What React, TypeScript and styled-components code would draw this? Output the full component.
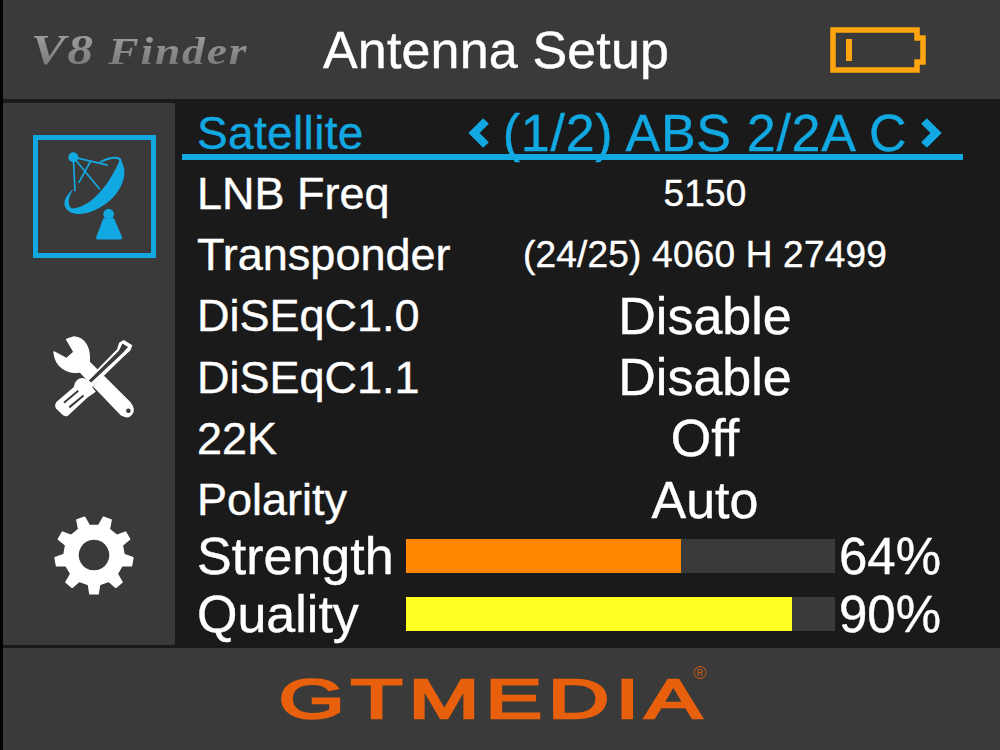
import React from "react";
import styled, { createGlobalStyle } from "styled-components";

const GlobalStyle = createGlobalStyle`
  html, body {
    margin: 0;
    background: #000;
  }
`;

const BLUE = "#12a9e2";
const PANEL = "#3a3a3a";
const DARK = "#1a1a1a";

const Screen = styled.div`
  width: 1000px;
  height: 750px;
  padding-left: 3px;
  box-sizing: border-box;
  display: flex;
  flex-direction: column;
  font-family: "Liberation Sans", Arial, sans-serif;
  color: #fff;
  overflow: hidden;
  -webkit-text-stroke: 0.4px currentColor;
`;

const Header = styled.header`
  height: 99px;
  flex: none;
  background: ${PANEL};
  display: flex;
  align-items: center;
`;

const Brand = styled.div`
  width: 320px;
  padding-left: 28px;
  box-sizing: border-box;
  flex: none;
  font-family: "Liberation Serif", serif;
  font-style: italic;
  font-weight: 700;
  font-size: 37px;
  letter-spacing: 1.5px;
  white-space: nowrap;
  background: linear-gradient(#a8a8a8, #6f6f6f);
  background-clip: text;
  -webkit-background-clip: text;
  color: transparent;
  -webkit-text-stroke: 0;
  transform: scaleX(1.23);
  transform-origin: 28px 50%;
  span {
    font-size: 42px;
  }
`;

const Title = styled.h1`
  margin: 0;
  font-size: 52px;
  font-weight: 400;
  letter-spacing: 0.15px;
  flex: 1;
  white-space: nowrap;
`;

const BatteryWrap = styled.svg`
  width: 96px;
  height: 46px;
  margin-right: 74px;
  flex: none;
`;

const Body = styled.div`
  flex: 1;
  display: flex;
  background: ${DARK};
  min-height: 0;
`;

const Sidebar = styled.nav`
  width: 172px;
  flex: none;
  margin: 4px 0 3px;
  background: ${PANEL};
  display: flex;
  flex-direction: column;
  align-items: center;
  padding: 32px 0 0 10px;
  box-sizing: border-box;
`;

const DishBox = styled.div`
  width: 123px;
  height: 123px;
  box-sizing: border-box;
  border: 5px solid ${BLUE};
  margin-bottom: 74px;
`;

const ToolIcon = styled.svg`
  display: block;
  width: 88px;
  height: 88px;
  margin-bottom: 94px;
`;

const GearIcon = styled.svg`
  display: block;
  width: 82px;
  height: 82px;
`;

const Main = styled.main`
  flex: 1;
  padding: 4px 37px 5px 7px;
  display: flex;
  flex-direction: column;
  min-width: 0;
`;

const SelectedRow = styled.div`
  height: 51px;
  flex: none;
  padding-left: 15px;
  border-bottom: 6px solid ${BLUE};
  color: ${BLUE};
  display: grid;
  grid-template-columns: 250px 516px;
  align-items: center;
`;

const Row = styled.div`
  height: 61.2px;
  flex: none;
  box-sizing: border-box;
  padding: 6px 0 0 15px;
  display: grid;
  grid-template-columns: 250px 516px;
  align-items: center;
  line-height: 1;
`;

const Label = styled.span`
  font-size: 45px;
  white-space: nowrap;
`;

const SatelliteLabel = styled(Label)`
  font-size: 46px;
  letter-spacing: 0.35px;
`;

const Value = styled.span<{ $small?: boolean }>`
  font-size: ${({ $small }) => ($small ? "37px" : "52px")};
  letter-spacing: ${({ $small }) => ($small ? "0.2px" : "0")};
  text-align: center;
  white-space: nowrap;
`;

const Picker = styled.div`
  display: flex;
  justify-content: center;
  align-items: center;
  gap: 12px;
  font-size: 52px;
  letter-spacing: 0.7px;
  white-space: nowrap;
`;

const Chevron = styled.svg`
  width: 24px;
  height: 30px;
  flex: none;
`;

const MeterRow = styled.div`
  height: 58px;
  flex: none;
  padding-left: 15px;
  display: flex;
  align-items: center;
  line-height: 1;
`;

const MeterLabel = styled.span`
  width: 209px;
  flex: none;
  font-size: 52px;
  white-space: nowrap;
`;

const Track = styled.div`
  width: 429px;
  height: 34px;
  flex: none;
  background: ${PANEL};
`;

const Fill = styled.div<{ $color: string }>`
  height: 100%;
  background: ${({ $color }) => $color};
`;

const Percent = styled.span`
  margin-left: 4px;
  font-size: 51px;
`;

const Footer = styled.footer`
  height: 102px;
  flex: none;
  background: ${PANEL};
  display: flex;
  justify-content: center;
  align-items: center;
`;

const Logo = styled.div`
  position: relative;
  margin-right: 16px;
  color: #e8600c;
  font-size: 55px;
  line-height: 41px;
  letter-spacing: 4px;
  -webkit-text-stroke: 2.4px #e8600c;
  transform: scaleX(1.54);
  white-space: nowrap;
`;

const Registered = styled.span`
  position: absolute;
  bottom: calc(100% - 3px);
  right: -2px;
  font-size: 18px;
  line-height: 1;
  letter-spacing: 0;
  color: #c4591a;
  -webkit-text-stroke: 0;
  font-weight: 400;
  transform: scaleX(0.65);
`;

const gearPath = (() => {
  const teeth = 9;
  const pts: string[] = [];
  for (let i = 0; i < teeth; i++) {
    const mid = Math.PI / 2 + (i * 2 * Math.PI) / teeth;
    const step = (2 * Math.PI) / teeth;
    const add = (a: number, r: number) =>
      pts.push(`${(41 + r * Math.cos(a)).toFixed(2)} ${(41 + r * Math.sin(a)).toFixed(2)}`);
    add(mid - step * 0.27, 30);
    add(mid - step * 0.15, 39);
    add(mid + step * 0.15, 39);
    add(mid + step * 0.27, 30);
  }
  return `M${pts.join("L")}Z M41 25a16 16 0 1 0 .01 0Z`;
})();

function Battery() {
  return (
    <BatteryWrap viewBox="0 0 96 46">
      <path d="M3 3H87V11H93V35H87V43H3Z" fill="none" stroke="#ffa50f" strokeWidth="5.5" />
      <rect x="16" y="12" width="6" height="22" fill="#ffa50f" />
    </BatteryWrap>
  );
}

function DishIcon() {
  return (
    <svg viewBox="54 60 339 336" width="113" height="113" style={{ display: "block" }}>
      <path
        d="M300 116C326 150 312 200 272 238C230 276 165 298 138 264C126 245 138 225 160 205C145 232 140 252 155 264C210 262 268 195 300 116Z"
        fill={BLUE}
      />
      <path d="M240 125C270 110 298 106 303 122" fill="none" stroke={BLUE} strokeWidth="6" />
      <g stroke={BLUE} strokeWidth="5" fill="none">
        <path d="M160 110L165 212M160 110L240 207M160 110L263 134M176 187L212 122" />
      </g>
      <circle cx="160" cy="110" r="15" fill={BLUE} />
      <circle cx="266" cy="281" r="16" fill={BLUE} />
      <path d="M250 293H282L307 352Q307 357 300 357H234Q227 357 228 352Z" fill={BLUE} />
    </svg>
  );
}

function ToolsIcon() {
  return (
    <ToolIcon viewBox="150 60 265 265">
      <path
        d="M222 75C255 78 272 108 268 150L392 274C412 300 392 325 365 310L240 180C205 188 165 165 162 120L200 140L222 120L200 82Z"
        fill="#fff"
        stroke="#fff"
        strokeWidth="4"
        strokeLinejoin="round"
      />
      <circle cx="386" cy="297" r="7" fill={PANEL} />
      <path d="M268 218L360 122" stroke={PANEL} strokeWidth="24" />
      <path d="M372 84L398 100L392 116L372 134L275 228L258 208L352 112L358 92Z" fill="#fff" />
      <path d="M368 95L385 105L368 124L274 212L267 206L358 116Z" fill={PANEL} />
      <path
        d="M262 206L288 240L262 258L204 312Q195 317 186 308L168 290Q162 280 170 270L222 226C226 198 250 192 262 206Z"
        fill="#fff"
      />
      <path d="M192 273L235 237M208 287L251 251" stroke={PANEL} strokeWidth="6" />
    </ToolIcon>
  );
}

function SettingsIcon() {
  return (
    <GearIcon viewBox="0 0 82 82">
      <path d={gearPath} fill="#fff" fillRule="evenodd" stroke="#fff" strokeWidth="1.5" strokeLinejoin="round" />
    </GearIcon>
  );
}

const rows: [string, string, boolean?][] = [
  ["LNB Freq", "5150", true],
  ["Transponder", "(24/25) 4060 H 27499", true],
  ["DiSEqC1.0", "Disable"],
  ["DiSEqC1.1", "Disable"],
  ["22K", "Off"],
  ["Polarity", "Auto"],
];

const meters = [
  { label: "Strength", value: 64, color: "#ff8800" },
  { label: "Quality", value: 90, color: "#ffff22" },
];

export default function App() {
  return (
    <>
      <GlobalStyle />
      <Screen>
        <Header>
          <Brand>
            <span>V8</span> Finder
          </Brand>
          <Title>Antenna Setup</Title>
          <Battery />
        </Header>
        <Body>
          <Sidebar>
            <DishBox>
              <DishIcon />
            </DishBox>
            <ToolsIcon />
            <SettingsIcon />
          </Sidebar>
          <Main>
            <SelectedRow>
              <SatelliteLabel>Satellite</SatelliteLabel>
              <Picker>
                <Chevron viewBox="0 0 24 30">
                  <path d="M19 3L7 15L19 27" fill="none" stroke={BLUE} strokeWidth="8" />
                </Chevron>
                (1/2) ABS 2/2A C
                <Chevron viewBox="0 0 24 30">
                  <path d="M5 3L17 15L5 27" fill="none" stroke={BLUE} strokeWidth="8" />
                </Chevron>
              </Picker>
            </SelectedRow>
            {rows.map(([label, value, small]) => (
              <Row key={label}>
                <Label>{label}</Label>
                <Value $small={small}>{value}</Value>
              </Row>
            ))}
            {meters.map((m) => (
              <MeterRow key={m.label}>
                <MeterLabel>{m.label}</MeterLabel>
                <Track>
                  <Fill $color={m.color} style={{ width: `${m.value}%` }} />
                </Track>
                <Percent>{m.value}%</Percent>
              </MeterRow>
            ))}
          </Main>
        </Body>
        <Footer>
          <Logo>
            GTMEDIA
            <Registered>®</Registered>
          </Logo>
        </Footer>
      </Screen>
    </>
  );
}
